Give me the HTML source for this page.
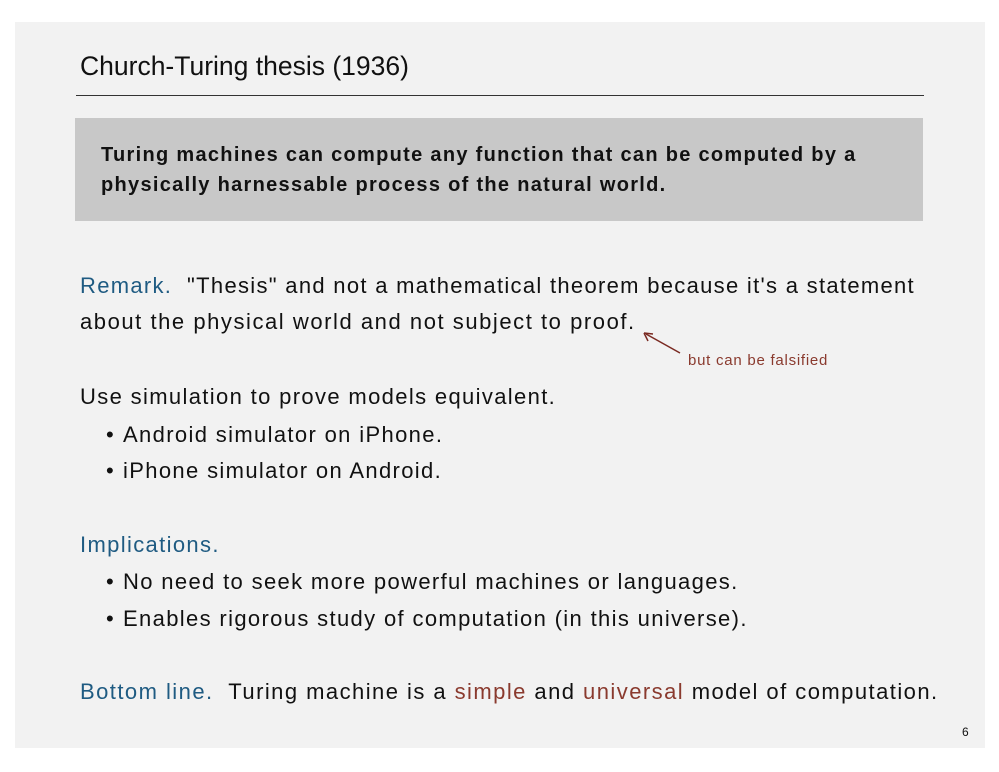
<!DOCTYPE html>
<html><head><meta charset="utf-8"><style>
body{margin:0;background:#fff;width:999px;height:772px;position:relative;overflow:hidden;font-family:"Liberation Sans",sans-serif;}
.slide{position:absolute;left:15px;top:22px;width:970px;height:726px;background:#f2f2f2;}
.t{position:absolute;white-space:nowrap;}
.title{left:80px;top:51px;font-size:26.5px;color:#111;}
.rule{position:absolute;left:76px;top:95px;width:848px;height:1px;background:#333;}
.box{position:absolute;left:75px;top:118px;width:848px;height:103px;background:#c8c8c8;}
.bx{font-size:20px;font-weight:bold;color:#111;left:101px;letter-spacing:1.3px;}
.b{font-size:22px;color:#111;letter-spacing:1.35px;}
.bl{color:#1f5b82;}
.rd{color:#8a3a2e;}
.bul{left:106px;}
.bul span{display:inline-block;width:17px;letter-spacing:0;}
</style></head><body>
<div class="slide"></div>
<div class="t title">Church-Turing thesis (1936)</div>
<div class="rule"></div>
<div class="box"></div>
<div class="t bx" style="top:144px">Turing machines can compute any function that can be computed by a</div>
<div class="t bx" style="top:174px">physically harnessable process of the natural world.</div>
<div class="t b" style="left:80px;top:273px;letter-spacing:1.3px"><span class="bl">Remark.</span>&nbsp; "Thesis" and not a mathematical theorem because it's a statement</div>
<div class="t b" style="left:80px;top:309px;letter-spacing:1.55px">about the physical world and not subject to proof.</div>
<svg style="position:absolute;left:640px;top:330px" width="50" height="30"><line x1="40" y1="23" x2="6" y2="4" stroke="#7a2a22" stroke-width="1.5"/><path d="M4 3 L13 4 M4 3 L8 11" stroke="#7a2a22" stroke-width="1.5" fill="none"/></svg>
<div class="t rd" style="left:688px;top:352px;font-size:15px;letter-spacing:0.75px">but can be falsified</div>
<div class="t b" style="left:80px;top:384px">Use simulation to prove models equivalent.</div>
<div class="t b bul" style="top:422px"><span>•</span>Android simulator on iPhone.</div>
<div class="t b bul" style="top:458px"><span>•</span>iPhone simulator on Android.</div>
<div class="t b bl" style="left:80px;top:532px">Implications.</div>
<div class="t b bul" style="top:569px"><span>•</span>No need to seek more powerful machines or languages.</div>
<div class="t b bul" style="top:606px"><span>•</span>Enables rigorous study of computation (in this universe).</div>
<div class="t b" style="left:80px;top:679px;letter-spacing:1.45px"><span class="bl">Bottom line.</span>&nbsp; Turing machine is a <span class="rd">simple</span> and <span class="rd">universal</span> model of computation.</div>
<div class="t" style="left:962px;top:725px;font-size:12px;color:#111">6</div>
</body></html>
